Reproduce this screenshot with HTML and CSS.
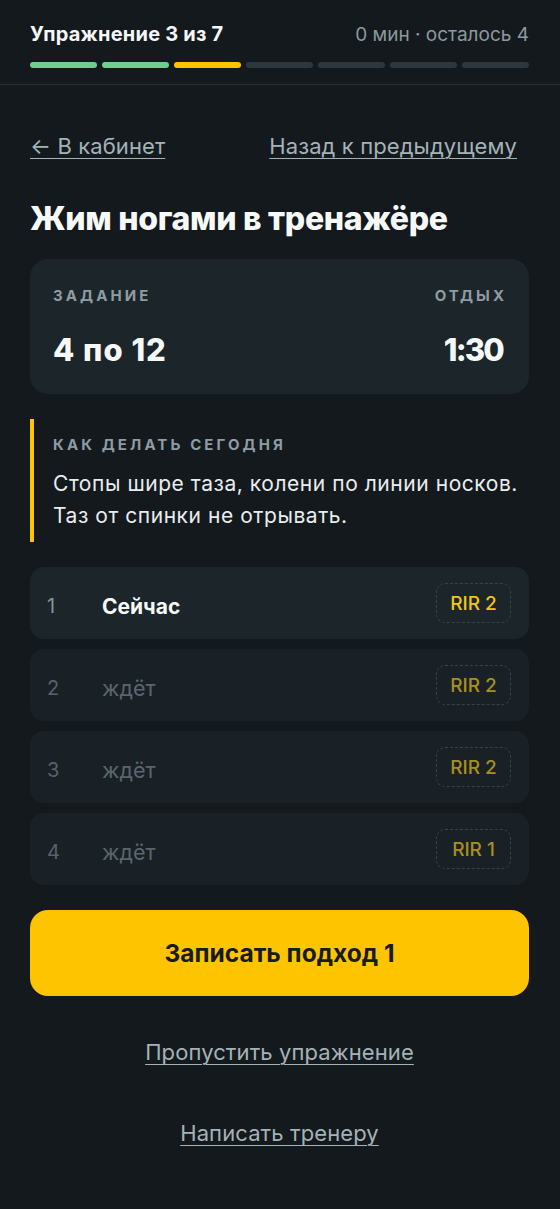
FILE: index.html
```html
<!DOCTYPE html>
<html lang="ru">
<head>
<meta charset="utf-8">
<title>Жим ногами в тренажёре</title>
<link rel="stylesheet" href="styles.css">
</head>
<body>
<header class="top">
  <div class="top-row">
    <span class="top-title">Упражнение 3 из 7</span>
    <span class="top-meta">0 мин · осталось 4</span>
  </div>
  <div class="progress">
    <span class="seg done"></span>
    <span class="seg done"></span>
    <span class="seg current"></span>
    <span class="seg"></span>
    <span class="seg"></span>
    <span class="seg"></span>
    <span class="seg"></span>
  </div>
</header>
<main class="page">
  <nav class="nav">
    <a class="link" href="#">← В кабинет</a>
    <a class="link link-prev" href="#">Назад к предыдущему</a>
  </nav>
  <h1 class="title">Жим ногами в тренажёре</h1>
  <section class="card">
    <div class="card-col">
      <div class="label">Задание</div>
      <div class="value">4 по 12</div>
    </div>
    <div class="card-col right">
      <div class="label">Отдых</div>
      <div class="value value-time">1:30</div>
    </div>
  </section>
  <section class="note">
    <div class="label">Как делать сегодня</div>
    <p class="note-text">Стопы шире таза, колени по линии носков. Таз от спинки не отрывать.</p>
  </section>
  <ul class="sets">
    <li class="set active"><span class="num">1</span><span class="state">Сейчас</span><span class="rir">RIR 2</span></li>
    <li class="set"><span class="num">2</span><span class="state">ждёт</span><span class="rir">RIR 2</span></li>
    <li class="set"><span class="num">3</span><span class="state">ждёт</span><span class="rir">RIR 2</span></li>
    <li class="set"><span class="num">4</span><span class="state">ждёт</span><span class="rir">RIR 1</span></li>
  </ul>
  <button class="primary">Записать подход 1</button>
  <div class="bottom-links">
    <a class="link" href="#">Пропустить упражнение</a>
    <a class="link" href="#">Написать тренеру</a>
  </div>
</main>
</body>
</html>
```
FILE: styles.css
```css
* { box-sizing: border-box; }
html, body { margin: 0; padding: 0; }
body {
  background: #13191d;
  color: #eef1f2;
  font-family: Inter, "Noto Sans", "DejaVu Sans", sans-serif;
  width: 560px;
  min-height: 1209px;
}
.top {
  padding: 22px 31px 16px 30px;
  border-bottom: 1px solid #263034;
}
.top-row {
  display: flex;
  justify-content: space-between;
  align-items: baseline;
  line-height: 24px;
}
.top-title { font-size: 20px; font-weight: 700; letter-spacing: 0.2px; color: #f4f6f7; }
.top-meta { font-size: 19px; color: #8c999f; }
.progress {
  display: flex;
  gap: 5px;
  margin-top: 15px;
}
.seg {
  flex: 1;
  height: 6px;
  border-radius: 3px;
  background: #2c383e;
}
.seg.done { background: #6fcf8f; }
.seg.current { background: #ffc400; }

.page { padding: 0 31px 0 30px; }
.nav {
  display: flex;
  justify-content: space-between;
  margin-top: 49px;
  line-height: 24px;
  padding-right: 12px;
}
.link {
  color: #a5b2b8;
  font-size: 22px;
  letter-spacing: 0.1px;
  text-decoration: underline;
  text-underline-offset: 4px;
  text-decoration-thickness: 1px;
}
.title {
  margin: 42px 0 0;
  font-size: 32px;
  line-height: 38px;
  font-weight: 800;
  letter-spacing: -0.3px;
  color: #f6f8f8;
}
.card {
  margin-top: 21px;
  background: #1c252a;
  border-radius: 18px;
  padding: 28px 25px 27px 23px;
  display: flex;
  justify-content: space-between;
}
.card-col.right { text-align: right; }
.label {
  font-size: 15px;
  line-height: 18px;
  font-weight: 700;
  letter-spacing: 3.1px;
  text-transform: uppercase;
  color: #8f9ca3;
}
.card-col.right .label { margin-right: -3.1px; }
.value {
  margin-top: 28px;
  font-size: 31px;
  line-height: 34px;
  font-weight: 800;
  letter-spacing: 1px;
  color: #f6f8f8;
}
.value-time { letter-spacing: -1.8px; margin-right: 1px; }
.note {
  margin-top: 25px;
  border-left: 4px solid #ffc400;
  padding: 17px 0 10px 19px;
}
.note-text {
  margin: 14px 0 0;
  font-size: 21px;
  line-height: 32px;
  letter-spacing: 0.55px;
  color: #e9edef;
}
.sets {
  list-style: none;
  margin: 25px 0 0;
  padding: 0;
  display: flex;
  flex-direction: column;
  gap: 10px;
}
.set {
  height: 72px;
  background: #192126;
  border-radius: 14px;
  display: flex;
  align-items: center;
  padding: 0 18px 0 17px;
}
.set.active { background: #1c252a; }
.num {
  width: 55px;
  padding-top: 6px;
  font-size: 20px;
  color: #58636a;
}
.state {
  flex: 1;
  padding-top: 6px;
  font-size: 21.5px;
  color: #5b666c;
}
.set.active .num { color: #87949b; }
.set.active .state { color: #f6f8f8; font-weight: 700; font-size: 21px; }
.rir {
  width: 75px;
  height: 40px;
  border: 1px dashed #37434a;
  border-radius: 9px;
  display: flex;
  align-items: center;
  justify-content: center;
  font-size: 19px;
  font-weight: 500;
  color: #a9901c;
}
.set.active .rir { color: #f2c617; }
.primary {
  display: block;
  width: 100%;
  margin-top: 25px;
  height: 86px;
  border: 0;
  border-radius: 18px;
  background: #ffc400;
  color: #171b1d;
  font-family: inherit;
  font-size: 24.5px;
  font-weight: 700;
}
.bottom-links {
  display: flex;
  flex-direction: column;
  align-items: center;
  gap: 57px;
  margin-top: 44px;
  line-height: 24px;
}
```
